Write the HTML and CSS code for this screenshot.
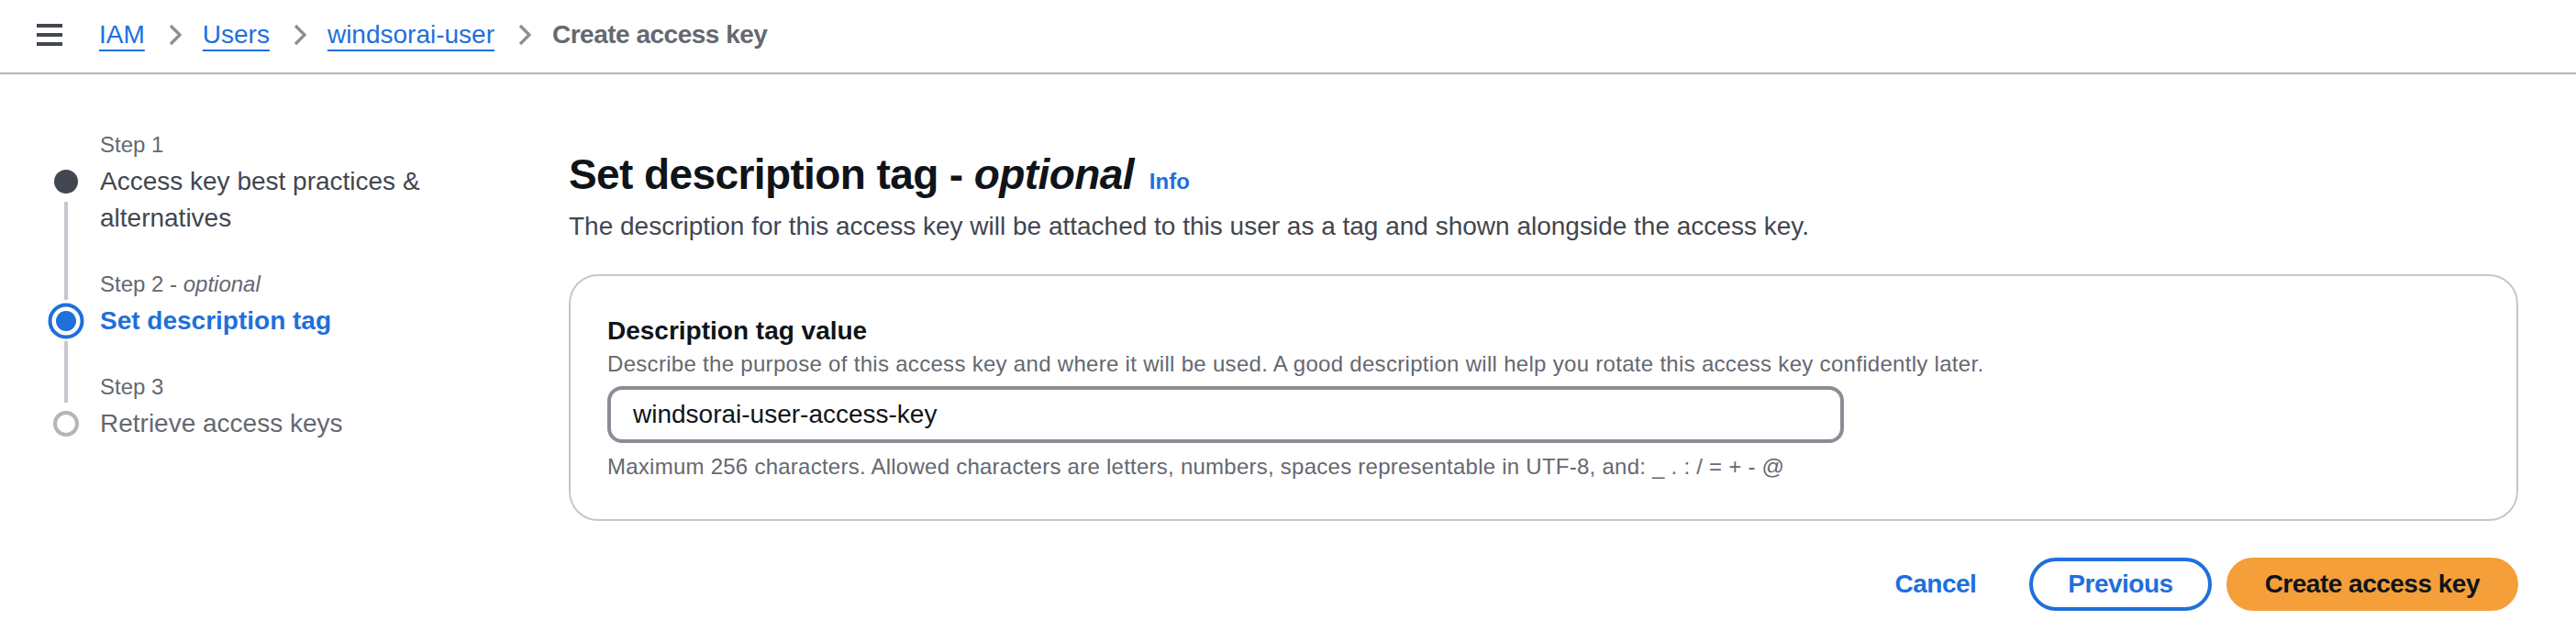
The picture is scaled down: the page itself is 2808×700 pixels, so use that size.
FILE: index.html
```html
<!DOCTYPE html>
<html lang="en">
<head>
<meta charset="utf-8">
<title>Create access key</title>
<link rel="stylesheet" href="styles.css">
</head>
<body>
<header class="topbar">
  <svg class="menu-icon" width="28" height="24" viewBox="0 0 28 24" aria-hidden="true">
    <rect x="0" y="0" width="28" height="4" fill="#424650"/>
    <rect x="0" y="10" width="28" height="4" fill="#424650"/>
    <rect x="0" y="20" width="28" height="4" fill="#424650"/>
  </svg>
  <nav class="crumbs">
    <a class="crumb-link" href="#">IAM</a>
    <svg class="chev" width="16" height="24" viewBox="0 0 16 24" aria-hidden="true"><path d="M3 2 L13 12 L3 22" fill="none" stroke="#8c8c94" stroke-width="3.2" stroke-linejoin="miter"/></svg>
    <a class="crumb-link" href="#">Users</a>
    <svg class="chev" width="16" height="24" viewBox="0 0 16 24" aria-hidden="true"><path d="M3 2 L13 12 L3 22" fill="none" stroke="#8c8c94" stroke-width="3.2" stroke-linejoin="miter"/></svg>
    <a class="crumb-link" href="#">windsorai-user</a>
    <svg class="chev" width="16" height="24" viewBox="0 0 16 24" aria-hidden="true"><path d="M3 2 L13 12 L3 22" fill="none" stroke="#8c8c94" stroke-width="3.2" stroke-linejoin="miter"/></svg>
    <span class="crumb-current">Create access key</span>
  </nav>
</header>

<div class="layout">
  <ol class="steps">
    <li class="step">
      <div class="rail-top"></div>
      <div class="step-label">Step 1</div>
      <div class="rail">
        <div class="icon-box"><span class="dot-done"></span></div>
        <div class="line line-below"></div>
      </div>
      <div class="step-title done">Access key best practices &amp; alternatives</div>
    </li>
    <li class="step">
      <div class="rail-top"><div class="line line-above"></div></div>
      <div class="step-label">Step 2 - <i>optional</i></div>
      <div class="rail">
        <div class="icon-box">
          <svg width="40" height="40" viewBox="0 0 40 40" aria-hidden="true">
            <circle cx="20" cy="20" r="17.5" fill="none" stroke="#1f6fdc" stroke-width="4"/>
            <circle cx="20" cy="20" r="11" fill="#1f6fdc"/>
          </svg>
        </div>
        <div class="line line-below"></div>
      </div>
      <div class="step-title active">Set description tag</div>
    </li>
    <li class="step">
      <div class="rail-top"><div class="line line-above"></div></div>
      <div class="step-label">Step 3</div>
      <div class="rail">
        <div class="icon-box">
          <svg width="30" height="30" viewBox="0 0 30 30" aria-hidden="true">
            <circle cx="15" cy="15" r="12" fill="none" stroke="#b4b4bb" stroke-width="4"/>
          </svg>
        </div>
      </div>
      <div class="step-title pending">Retrieve access keys</div>
    </li>
  </ol>

  <main class="content">
    <h1 class="page-title"><span>Set description tag - <i>optional</i></span><a class="info" href="#">Info</a></h1>
    <p class="page-desc">The description for this access key will be attached to this user as a tag and shown alongside the access key.</p>

    <section class="panel">
      <label class="field-label" for="desc">Description tag value</label>
      <div class="field-help">Describe the purpose of this access key and where it will be used. A good description will help you rotate this access key confidently later.</div>
      <input class="field-input" id="desc" type="text" value="windsorai-user-access-key">
      <div class="field-constraint">Maximum 256 characters. Allowed characters are letters, numbers, spaces representable in UTF-8, and: _ . : / = + - @</div>
    </section>

    <div class="actions">
      <button class="btn btn-link" type="button">Cancel</button>
      <button class="btn btn-normal" type="button">Previous</button>
      <button class="btn btn-primary" type="button">Create access key</button>
    </div>
  </main>
</div>
</body>
</html>
```

FILE: styles.css
```css
* { box-sizing: border-box; }

html, body {
  margin: 0;
  padding: 0;
  background: #ffffff;
}

body {
  font-family: "Liberation Sans", Arial, sans-serif;
  color: #0f141a;
  width: 2808px;
  height: 700px;
  overflow: hidden;
}

/* Top bar */
.topbar {
  height: 81px;
  border-bottom: 2px solid #b4b4bb;
  display: flex;
  align-items: center;
  padding: 0 0 4px 40px;
}

.menu-icon {
  display: block;
  flex: none;
}

.crumbs {
  display: flex;
  align-items: center;
  margin-left: 40px;
  font-size: 28px;
  line-height: 40px;
}

.crumb-link {
  color: #1f6fdc;
  text-decoration: underline;
  text-decoration-thickness: 2px;
  text-underline-offset: 7px;
}

.chev {
  display: block;
  margin: 0 22px 0 25px;
  flex: none;
}

.crumb-current {
  color: #656871;
  font-weight: 700;
  letter-spacing: -0.5px;
}

/* Layout */
.layout {
  display: flex;
  padding: 61px 63px 0 52px;
}

/* Steps */
.steps {
  list-style: none;
  margin: 0;
  padding: 0;
  width: 568px;
  flex: none;
}

.step {
  display: grid;
  grid-template-columns: 40px 400px;
  column-gap: 17px;
  padding-bottom: 36px;
}

.step:last-child {
  padding-bottom: 0;
}

.rail-top {
  grid-column: 1;
  grid-row: 1;
  display: flex;
  justify-content: center;
}

.step-label {
  grid-column: 2;
  grid-row: 1;
  font-size: 24px;
  line-height: 32px;
  color: #656871;
  margin-bottom: 4px;
}

.rail {
  grid-column: 1;
  grid-row: 2;
  display: flex;
  flex-direction: column;
  align-items: center;
  margin-bottom: -36px;
}

.step:last-child .rail {
  margin-bottom: 0;
}

.icon-box {
  height: 40px;
  width: 40px;
  display: flex;
  align-items: center;
  justify-content: center;
  flex: none;
}

.icon-box svg {
  display: block;
}

.dot-done {
  width: 26px;
  height: 26px;
  border-radius: 50%;
  background: #424650;
}

.line {
  width: 4px;
  background: #c6c6cd;
}

.line-below {
  flex: 1;
  margin-top: 2px;
}

.line-above {
  margin-bottom: 3px;
}

.step-title {
  grid-column: 2;
  grid-row: 2;
  font-size: 28px;
  line-height: 40px;
}

.step-title.done {
  color: #424650;
}

.step-title.active {
  color: #1f6fdc;
  font-weight: 700;
}

.step-title.pending {
  color: #656871;
}

/* Content */
.content {
  flex: 1;
  min-width: 0;
  padding-top: 20px;
}

.page-title {
  margin: 0;
  display: flex;
  align-items: baseline;
  font-size: 46px;
  line-height: 56px;
  font-weight: 700;
  letter-spacing: -0.6px;
  color: #0f141a;
}

.info {
  font-size: 24px;
  letter-spacing: 0;
  color: #1f6fdc;
  text-decoration: none;
  margin-left: 17px;
}

.page-desc {
  margin: 1px 0 0;
  font-size: 28px;
  line-height: 40px;
  color: #424650;
}

.panel {
  margin-top: 32px;
  border: 2px solid #c6c6cd;
  border-radius: 32px;
  padding: 40px 40px 41px;
  display: flex;
  flex-direction: column;
  align-items: flex-start;
}

.field-label {
  font-size: 28px;
  line-height: 40px;
  font-weight: 700;
  color: #0f141a;
}

.field-help {
  font-size: 24px;
  line-height: 32px;
  letter-spacing: 0.3px;
  color: #656871;
}

.field-input {
  margin-top: 8px;
  width: 1348px;
  height: 62px;
  border: 4px solid #8c8c94;
  border-radius: 16px;
  padding: 0 24px;
  font-family: "Liberation Sans", Arial, sans-serif;
  font-size: 28px;
  color: #0f141a;
  background: #ffffff;
  outline: none;
}

.field-constraint {
  margin-top: 10px;
  font-size: 24px;
  line-height: 32px;
  letter-spacing: 0.25px;
  color: #656871;
}

/* Actions */
.actions {
  margin-top: 40px;
  display: flex;
  justify-content: flex-end;
  gap: 16px;
}

.btn {
  height: 58px;
  padding: 0 38px;
  border: 4px solid transparent;
  border-radius: 29px;
  font-family: "Liberation Sans", Arial, sans-serif;
  font-size: 28px;
  font-weight: 700;
  letter-spacing: -0.5px;
  background: transparent;
  cursor: pointer;
}

.btn-link {
  color: #1f6fdc;
}

.btn-normal {
  color: #1f6fdc;
  border-color: #1f6fdc;
  background: #ffffff;
}

.btn-primary {
  color: #0f141a;
  background: #f49f3a;
  border-color: #f49f3a;
}
```
